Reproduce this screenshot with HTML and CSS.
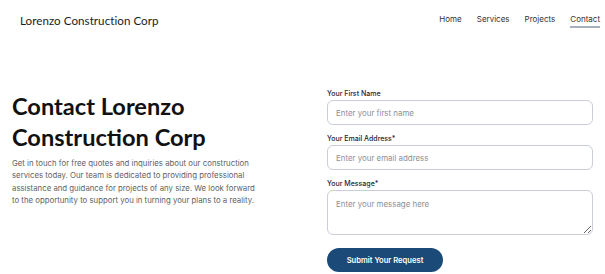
FILE: index.html
```html
<!DOCTYPE html>
<html>
<head>
<meta charset="utf-8">
<link rel="stylesheet" href="styles.css">
</head>
<body>
<header class="top">
  <div class="logo">Lorenzo Construction Corp</div>
  <nav class="nav">
    <a>Home</a>
    <a>Services</a>
    <a>Projects</a>
    <a class="active">Contact</a>
  </nav>
</header>
<main class="main">
  <section class="intro">
    <h1>Contact Lorenzo Construction Corp</h1>
    <p>Get in touch for free quotes and inquiries about our construction services today. Our team is dedicated to providing professional assistance and guidance for projects of any size. We look forward to the opportunity to support you in turning your plans to a reality.</p>
  </section>
  <form class="form">
    <div class="field">
      <label>Your First Name</label>
      <input class="input" placeholder="Enter your first name">
    </div>
    <div class="field">
      <label>Your Email Address*</label>
      <input class="input" placeholder="Enter your email address">
    </div>
    <div class="field">
      <label>Your Message*</label>
      <textarea class="input area" placeholder="Enter your message here"></textarea>
    </div>
    <button type="button" class="btn">Submit Your Request</button>
  </form>
</main>
</body>
</html>
```
FILE: styles.css
```css
* { box-sizing: border-box; }
body {
  margin: 0;
  background: #fff;
  font-family: Inter, "Liberation Sans", sans-serif;
  color: #1a1a1a;
}
.top {
  height: 40px;
  display: flex;
  align-items: center;
  justify-content: space-between;
  padding: 1px 5px 0 20px;
}
.logo {
  font-family: Lato, "Open Sans", sans-serif;
  font-size: 11.6px;
  color: #1c1c1c;
  letter-spacing: 0.05px;
}
.nav {
  display: flex;
  gap: 15px;
  font-size: 8px;
  color: #333;
}
.nav a { padding-bottom: 2px; border-bottom: 2px solid transparent; }
.nav a.active { border-bottom-color: #a8afbd; }
.main {
  display: grid;
  grid-template-columns: 1fr 266px;
  gap: 24px;
  padding: 48px 12px 0 12px;
  align-items: start;
}
.intro h1 {
  margin: 3px 0 0;
  font-family: Lato, "Open Sans", sans-serif;
  font-size: 23.6px;
  line-height: 31px;
  font-weight: 700;
  color: #111;
}
.intro p {
  margin: 4px 0 0;
  max-width: 252px;
  font-size: 7.8px;
  line-height: 12.4px;
  color: #5f5f66;
}
.form { display: flex; flex-direction: column; }
.field { display: flex; flex-direction: column; margin-bottom: 8px; }
.field label {
  font-size: 7px;
  line-height: 11px;
  font-weight: 500;
  color: #1c2536;
  margin-bottom: 1px;
}
.input {
  height: 25px;
  border: 1px solid #c9ced6;
  border-radius: 6px;
  padding: 0 8px;
  font-family: Inter, "Liberation Sans", sans-serif;
  font-size: 7.9px;
  color: #333;
  background: #fff;
}
.input::placeholder { color: #8c8f96; }
.area {
  height: 45px;
  padding-top: 8px;
  resize: vertical;
}
.btn {
  margin-top: 5px;
  width: 116px;
  height: 24px;
  border: none;
  border-radius: 12px;
  background: #1b4a78;
  color: #fff;
  font-family: Inter, "Liberation Sans", sans-serif;
  font-size: 7.6px;
  font-weight: 600;
}
```
